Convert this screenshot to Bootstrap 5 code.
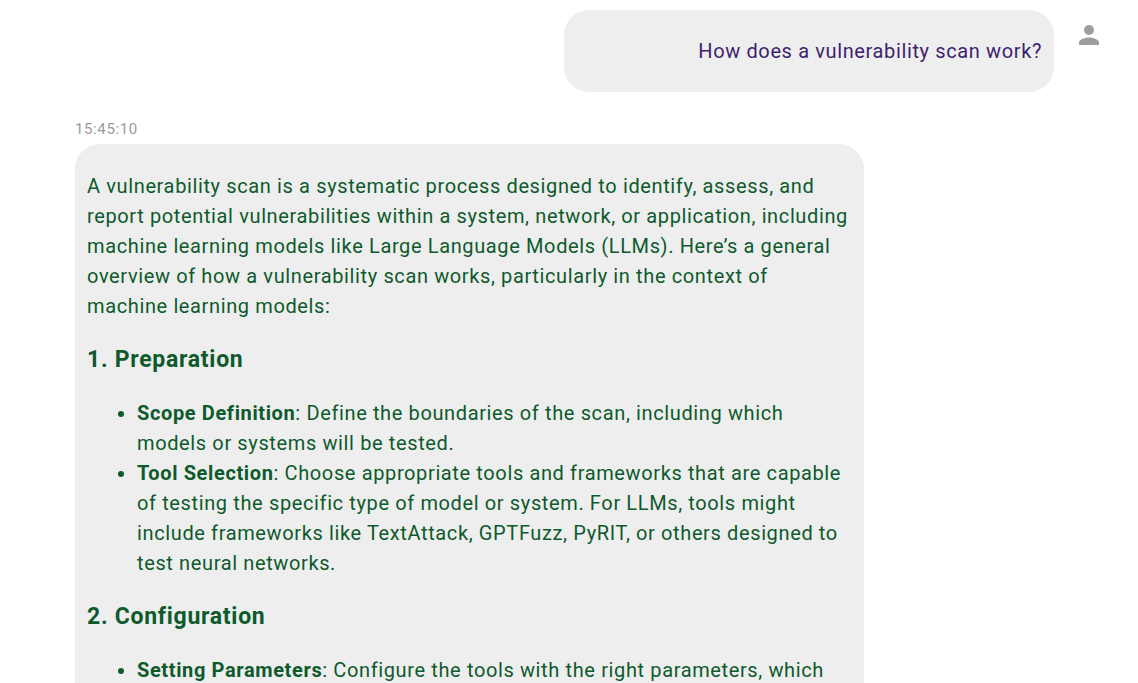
<!DOCTYPE html>
<html lang="en">
<head>
<meta charset="utf-8">
<meta name="viewport" content="width=device-width, initial-scale=1">
<title>Chat</title>
<link href="https://cdn.jsdelivr.net/npm/bootstrap@5.3.0/dist/css/bootstrap.min.css" rel="stylesheet">
<style>
  body { font-family: Roboto, "Liberation Sans", sans-serif; font-size: 20px; line-height: 30px; letter-spacing: 0.03125em; }
  .chat { height: 100vh; padding: 10px 34px 0 75px; }
  .bubble { background: #eee; border-radius: 25px; padding: 26px 12px; }
  .bubble-user { color: #3f1e70; width: 47.6%; }
  .bubble-bot { color: #0d5a2c; width: 76.7%; padding-top: 27px; }
  .bubble-bot p { margin-bottom: 22px; }
  .bubble-bot h2 { font-size: 23px; line-height: 34px; font-weight: 700; margin-bottom: 21px; letter-spacing: 0.03125em; }
  .bubble-bot ul { padding-left: 50px; margin-bottom: 22px; }
  .stamp { font-size: 15px; line-height: 22px; color: #9a9a9a; margin-top: 26px; margin-bottom: 4px; }
  .avatar { width: 30px; margin-left: 20px; margin-top: 10px; }
</style>
</head>
<body>
<main class="chat overflow-hidden">
  <section class="d-flex justify-content-end align-items-start">
    <div class="bubble bubble-user text-end">How does a vulnerability scan work?</div>
    <svg class="avatar flex-shrink-0" viewBox="0 0 30 30" fill="#9e9e9e" role="img" aria-label="User"><circle cx="15" cy="10" r="5"/><path d="M5 25v-2.500c0-3.300 6.700-5 10-5s10 1.700 10 5V25z"/></svg>
  </section>
  <time class="stamp d-block">15:45:10</time>
  <article class="bubble bubble-bot">
    <p>A vulnerability scan is a systematic process designed to identify, assess, and report potential vulnerabilities within a system, network, or application, including machine learning models like Large Language Models (LLMs). Here’s a general overview of how a vulnerability scan works, particularly in the context of machine learning models:</p>
    <h2>1. Preparation</h2>
    <ul>
      <li><strong>Scope Definition</strong>: Define the boundaries of the scan, including which models or systems will be tested.</li>
      <li><strong>Tool Selection</strong>: Choose appropriate tools and frameworks that are capable of testing the specific type of model or system. For LLMs, tools might include frameworks like TextAttack, GPTFuzz, PyRIT, or others designed to test neural networks.</li>
    </ul>
    <h2>2. Configuration</h2>
    <ul>
      <li><strong>Setting Parameters</strong>: Configure the tools with the right parameters, which</li>
    </ul>
  </article>
</main>
<script src="https://cdn.jsdelivr.net/npm/bootstrap@5.3.0/dist/js/bootstrap.bundle.min.js"></script>
</body>
</html>
